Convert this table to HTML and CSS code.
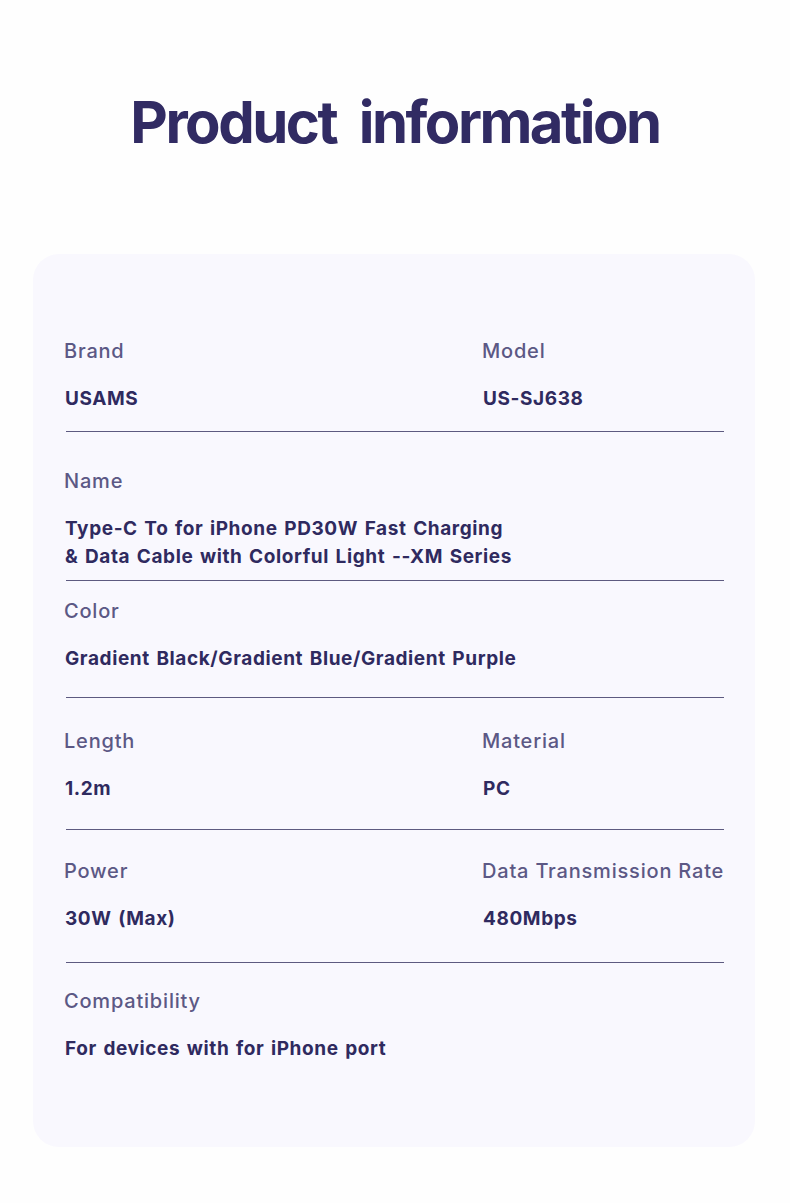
FILE: index.html
```html
<!DOCTYPE html>
<html lang="en">
<head>
<meta charset="utf-8">
<title>Product information</title>
<link rel="stylesheet" href="styles.css">
</head>
<body>
<main class="page">
  <h1 class="title">Product&nbsp; information</h1>
  <section class="card">
    <div class="row row--1">
      <div class="field"><p class="label">Brand</p><p class="value">USAMS</p></div>
      <div class="field"><p class="label">Model</p><p class="value">US-SJ638</p></div>
    </div>
    <div class="row row--2">
      <div class="field field--wide"><p class="label">Name</p><p class="value">Type-C To for iPhone PD30W Fast Charging<br>&amp; Data Cable with Colorful Light --XM Series</p></div>
    </div>
    <div class="row row--3">
      <div class="field field--wide"><p class="label">Color</p><p class="value">Gradient Black/Gradient Blue/Gradient Purple</p></div>
    </div>
    <div class="row row--4">
      <div class="field"><p class="label">Length</p><p class="value">1.2m</p></div>
      <div class="field"><p class="label">Material</p><p class="value">PC</p></div>
    </div>
    <div class="row row--5">
      <div class="field"><p class="label">Power</p><p class="value">30W (Max)</p></div>
      <div class="field"><p class="label">Data Transmission Rate</p><p class="value">480Mbps</p></div>
    </div>
    <div class="row row--6">
      <div class="field field--wide"><p class="label">Compatibility</p><p class="value">For devices with for iPhone port</p></div>
    </div>
  </section>
</main>
</body>
</html>
```
FILE: styles.css
```css
* { box-sizing: border-box; }
html, body { margin: 0; padding: 0; }
body {
  background: #fefefe;
  font-family: Inter, "Noto Sans", sans-serif;
  color: #2f2a5f;
}
.page {
  width: 790px;
  padding-top: 86px;
}
.title {
  margin: 0;
  text-align: center;
  font-size: 58px;
  line-height: 72px;
  font-weight: 700;
  color: #312b63;
  letter-spacing: -2.5px;
  padding-left: 0;
}
.card {
  margin: 96px 0 0 33px;
  width: 722px;
  height: 893px;
  background: #f9f8fe;
  border-radius: 26px;
  padding: 0 31px 0 33px;
}
.row {
  display: grid;
  grid-template-columns: 418px 1fr;
  border-bottom: 1px solid #5d5a80;
}
.row--1 { padding: 85px 0 18px; }
.row--2 { padding: 37px 0 9px; }
.row--3 { padding: 18px 0 24px; }
.row--4 { padding: 31px 0 26px; }
.row--5 { padding: 29px 0 29px; }
.row--6 { padding: 26px 0 0; border-bottom: none; }
.field--wide { grid-column: 1 / -1; }
.label {
  margin: 0 0 22px -2px;
  font-size: 20px;
  line-height: 24px;
  font-weight: 500;
  color: #5c5885;
  letter-spacing: 0.8px;
  white-space: nowrap;
}
.value {
  margin: 0 0 0 -1px;
  font-size: 19px;
  line-height: 28px;
  font-weight: 700;
  color: #2f2a5f;
  letter-spacing: 0.6px;
  word-spacing: 1.5px;
  white-space: nowrap;
}
```
